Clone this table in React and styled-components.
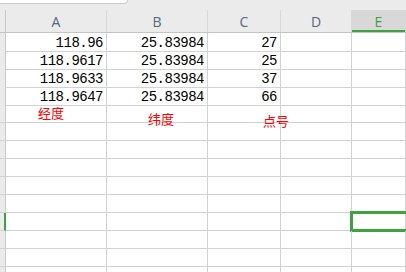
import React from "react";
import styled, { createGlobalStyle, css } from "styled-components";

const GlobalStyle = createGlobalStyle`
  html, body {
    margin: 0;
    padding: 0;
    background: #ffffff;
    overflow: hidden;
  }
  * { box-sizing: border-box; }
`;

const GREEN = "#3fa142";
const GRID = "#d2d2d2";
const COLS = "6px 101px 101px 73px 71px 1fr";

const Sheet = styled.div`
  position: relative;
  width: 406px;
  height: 272px;
  overflow: hidden;
  display: flex;
  flex-direction: column;
  background: #ffffff;
`;

const TopStrip = styled.div`
  flex-shrink: 0;
  height: 10px;
  background: #ebebeb;
  display: flex;
  align-items: flex-start;
`;

const FormulaTab = styled.div`
  width: 128px;
  height: 4px;
  background: #ffffff;
  border-bottom: 1px solid #cacaca;
  border-right: 1px solid #cacaca;
  border-bottom-right-radius: 5px;
`;

const HeaderRow = styled.div`
  flex-shrink: 0;
  display: grid;
  grid-template-columns: ${COLS};
  height: 23px;
  background: #ebebeb;
  border-bottom: 1px solid #c4c4c4;
`;

const Corner = styled.div`
  border-right: 1px solid #c8c8c8;
  background: #ebebeb;
`;

const ColHead = styled.div`
  display: flex;
  align-items: center;
  justify-content: center;
  font-family: "Open Sans", "Noto Sans", sans-serif;
  font-size: 14px;
  color: #56667c;
  border-right: 1px solid #d8d8d8;
  background: #ebebeb;
  ${(p) =>
    p.$active &&
    css`
      background: #d8d8d8;
      color: ${GREEN};
      box-shadow: inset 0 -2px 0 ${GREEN};
    `}
`;

const Row = styled.div`
  display: grid;
  grid-template-columns: ${COLS};
  height: 18px;
  flex-shrink: 0;
`;

const RowHead = styled.div`
  background: #ebebeb;
  border-bottom: 1px solid ${GRID};
  border-right: 1px solid #c8c8c8;
  ${(p) =>
    p.$active &&
    css`
      border-right: 2px solid ${GREEN};
    `}
`;

const Cell = styled.div`
  position: relative;
  border-right: 1px solid ${GRID};
  border-bottom: 1px solid ${GRID};
  padding: 3px 3px 0 0;
  font-family: "Liberation Mono", "DejaVu Sans Mono", monospace;
  font-size: 14px;
  letter-spacing: -0.5px;
  line-height: 15px;
  color: #000000;
  text-align: right;
  white-space: nowrap;
  ${(p) =>
    p.$selected &&
    css`
      &::after {
        content: "";
        position: absolute;
        left: -2px;
        top: -2px;
        right: -6px;
        bottom: -2px;
        border: 3px solid ${GREEN};
      }
    `}
`;

const Note = styled.span`
  position: absolute;
  font-family: "Noto Sans CJK SC", "Noto Sans", sans-serif;
  font-size: 13px;
  line-height: 1;
  color: #ff0000;
  white-space: nowrap;
`;

const columns = ["A", "B", "C", "D", "E"];

const data = [
  ["118.96", "25.83984", "27"],
  ["118.9617", "25.83984", "25"],
  ["118.9633", "25.83984", "37"],
  ["118.9647", "25.83984", "66"],
];

const notes = [
  { text: "经度", left: 38, top: 106 },
  { text: "纬度", left: 148, top: 112 },
  { text: "点号", left: 263, top: 114 },
];

const ROW_COUNT = 14;
const ACTIVE_ROW = 10;
const ACTIVE_COL = 4;

export default function App() {
  return (
    <>
      <GlobalStyle />
      <Sheet>
        <TopStrip>
          <FormulaTab />
        </TopStrip>
        <HeaderRow>
          <Corner />
          {columns.map((c, i) => (
            <ColHead key={c} $active={i === ACTIVE_COL}>
              {c}
            </ColHead>
          ))}
        </HeaderRow>
        {Array.from({ length: ROW_COUNT }).map((_, r) => (
          <Row key={r}>
            <RowHead $active={r === ACTIVE_ROW} />
            {columns.map((c, ci) => (
              <Cell key={c} $selected={r === ACTIVE_ROW && ci === ACTIVE_COL}>
                {data[r] && data[r][ci] ? data[r][ci] : ""}
              </Cell>
            ))}
          </Row>
        ))}
        {notes.map((n) => (
          <Note key={n.text} style={{ left: n.left, top: n.top }}>
            {n.text}
          </Note>
        ))}
      </Sheet>
    </>
  );
}
